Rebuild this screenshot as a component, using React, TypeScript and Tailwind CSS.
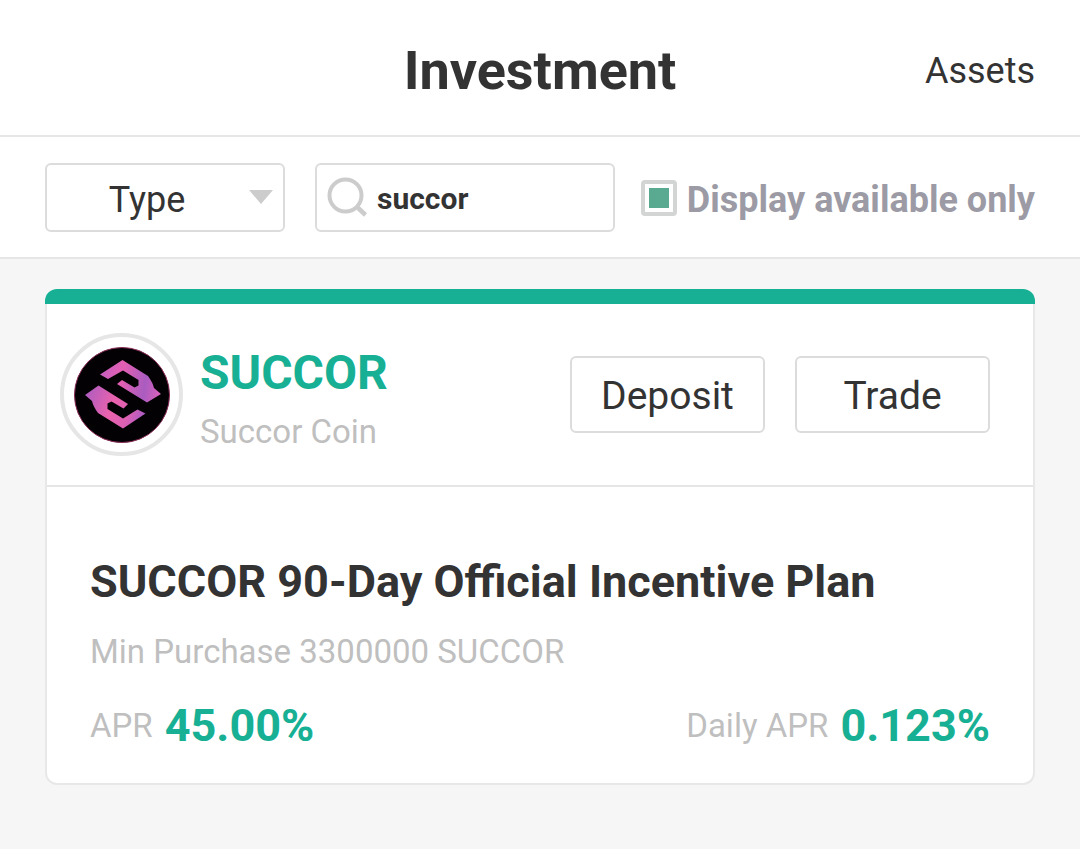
import { useState } from "react";

const plans = [
  {
    title: "SUCCOR 90-Day Official Incentive Plan",
    minimum: "Min Purchase 3300000 SUCCOR",
    apr: "45.00%",
    dailyApr: "0.123%",
  },
];

function SearchIcon() {
  return (
    <svg viewBox="0 0 42 42" className="size-[42px] shrink-0" fill="none" stroke="#cccccc" aria-hidden="true">
      <circle cx="18.500" cy="18.500" r="16" strokeWidth="4" />
      <path d="M29.500 29.500L38.500 38" strokeWidth="4.500" />
    </svg>
  );
}

function CoinLogo() {
  return (
    <svg viewBox="0 0 96 96" className="size-24" aria-hidden="true">
      <defs>
        <linearGradient id="upper" x1="26" y1="30" x2="86" y2="40" gradientUnits="userSpaceOnUse">
          <stop offset="0" stopColor="#c65fc0" />
          <stop offset="0.350" stopColor="#e45fb2" />
          <stop offset="0.750" stopColor="#a95cc0" />
          <stop offset="1" stopColor="#d660bd" />
        </linearGradient>
        <linearGradient id="lower" x1="12" y1="48" x2="70" y2="70" gradientUnits="userSpaceOnUse">
          <stop offset="0" stopColor="#b05dc0" />
          <stop offset="0.450" stopColor="#ea62ad" />
          <stop offset="0.750" stopColor="#dc60b2" />
          <stop offset="1" stopColor="#a95cc6" />
        </linearGradient>
      </defs>
      <circle cx="48" cy="48" r="47.500" fill="#030103" stroke="#8c2a58" strokeWidth="1" />
      <path
        d="M26 27.500L48.500 13L74 29Q79 36 80 41L87 47L73 55.500L43 37L48 33L60.500 40.500L64.500 38.500V33L49 23.500L34 32Z"
        fill="url(#upper)"
      />
      <path
        d="M71.500 66.500L49 81.500L24 66Q19 59 18 54L11 48L24.500 38.500L54 57L49.500 61.500L37.500 54.500L33.500 56.500V62L49 71.500L63.500 62.500Z"
        fill="url(#lower)"
      />
    </svg>
  );
}

export default function App() {
  const [query, setQuery] = useState("succor");
  const [availableOnly, setAvailableOnly] = useState(true);

  return (
    <div className="min-h-screen bg-[#f6f6f6] font-['Roboto',sans-serif] text-[#333333]">
      <header className="grid grid-cols-[1fr_auto_1fr] items-center border-b-2 border-[#e6e6e6] bg-white px-[45px] pt-[35px] pb-7">
        <h1 className="col-start-2 text-[54px] leading-[72px] font-bold">Investment</h1>
        <a href="#assets" className="justify-self-end text-4xl">
          Assets
        </a>
      </header>

      <form
        className="flex items-center border-b-2 border-[#e6e6e6] bg-white px-[45px] pt-[26px] pb-[25px]"
        onSubmit={(event) => event.preventDefault()}
      >
        <div className="relative w-60 shrink-0">
          <select
            aria-label="Type"
            className="block h-[69px] w-full appearance-none rounded-md border-2 border-[#dcdcdc] bg-white pt-1 pr-9 text-center text-4xl"
          >
            <option>Type</option>
            <option>Fixed</option>
            <option>Flexible</option>
          </select>
          <svg
            viewBox="0 0 24 14"
            className="pointer-events-none absolute top-[27px] right-3 h-3.5 w-6"
            fill="#cccccc"
            aria-hidden="true"
          >
            <path d="M0 0H24L12 14Z" />
          </svg>
        </div>

        <label className="ml-[30px] flex h-[69px] w-[300px] items-center gap-2 rounded-md border-2 border-[#dcdcdc] px-2.5">
          <SearchIcon />
          <input
            type="text"
            aria-label="Search coins"
            value={query}
            onChange={(event) => setQuery(event.target.value)}
            className="min-w-0 flex-1 pt-0.5 text-[30px] leading-10 font-bold outline-none"
          />
        </label>

        <label className="ml-auto flex items-center gap-2.5 text-4xl font-bold whitespace-nowrap text-[#9c9ba5]">
          <input
            type="checkbox"
            checked={availableOnly}
            onChange={(event) => setAvailableOnly(event.target.checked)}
            className="size-9 appearance-none rounded-sm border-4 border-[#d3d4d4] bg-clip-content p-1 checked:bg-[#59aa90]"
          />
          <span className="pt-1">Display available only</span>
        </label>
      </form>

      <main className="px-[45px] py-[30px]">
        <article>
          <div className="h-[15px] rounded-t-xl bg-[#18b094]" />
          <div className="rounded-b-xl border-2 border-t-0 border-[#e8e8e8] bg-white">
            <div className="flex items-center border-b-2 border-[#e6e6e6] py-[29px] pr-[43px] pl-[13px]">
              <div className="flex size-[123px] items-center justify-center rounded-full border-4 border-[#e6e6e6]">
                <CoinLogo />
              </div>
              <div className="ml-[17px] pt-3">
                <h2 className="text-5xl leading-[54px] font-bold text-[#18b094]">SUCCOR</h2>
                <p className="mt-2 text-[33px] leading-[48px] text-[#bfbfbf]">Succor Coin</p>
              </div>
              <div className="ml-auto flex gap-[30px]">
                <button type="button" className="h-[77px] w-[195px] rounded-md border-2 border-[#dcdcdc] pt-1 text-[39px]">
                  Deposit
                </button>
                <button type="button" className="h-[77px] w-[195px] rounded-md border-2 border-[#dcdcdc] pt-1 text-[39px]">
                  Trade
                </button>
              </div>
            </div>

            {plans.map((plan) => (
              <section key={plan.title} className="px-[43px] pt-[59px] pb-[17px]">
                <h3 className="text-[45px] leading-[72px] font-bold">{plan.title}</h3>
                <p className="text-[33px] leading-[68px] text-[#bfbfbf]">{plan.minimum}</p>
                <dl className="flex justify-between leading-[80px]">
                  <div className="flex items-center gap-3">
                    <dt className="text-[33px] text-[#bfbfbf]">APR</dt>
                    <dd className="text-[45px] font-bold text-[#18b094]">{plan.apr}</dd>
                  </div>
                  <div className="flex items-center gap-3">
                    <dt className="text-[33px] text-[#bfbfbf]">Daily APR</dt>
                    <dd className="text-[45px] font-bold text-[#18b094]">{plan.dailyApr}</dd>
                  </div>
                </dl>
              </section>
            ))}
          </div>
        </article>
      </main>
    </div>
  );
}
